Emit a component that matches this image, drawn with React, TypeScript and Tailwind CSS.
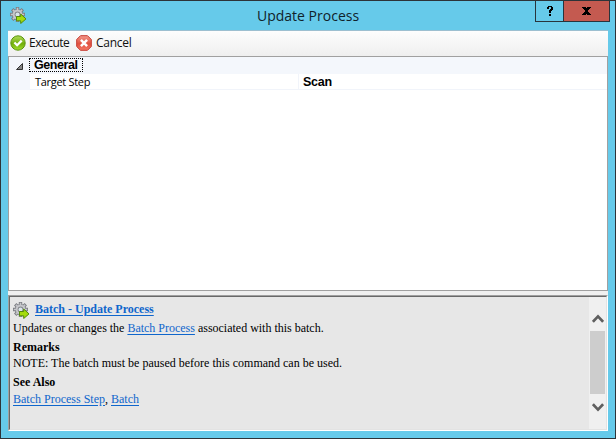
import React from "react";

function GearIcon() {
  return (
    <svg width="17" height="17" viewBox="0 0 17 17" className="block shrink-0">
      <g stroke="#7c7e83" strokeWidth="3.4">
        <path d="M7.5 0v15M0 7.5h15M2.2 2.2l10.6 10.6M12.8 2.2L2.2 12.8" />
      </g>
      <circle cx="7.5" cy="7.5" r="5.6" fill="#7c7e83" />
      <g stroke="#c6c7cb" strokeWidth="1.6">
        <path d="M7.5 .8v13.4M.8 7.5h13.4M2.9 2.9l9.2 9.2M12.1 2.9l-9.2 9.2" />
      </g>
      <circle cx="7.5" cy="7.5" r="4" fill="#d0d1d4" stroke="#c6c7cb" strokeWidth="1.6" />
      <circle cx="7.5" cy="7.5" r="2.9" fill="#808287" />
      <circle cx="7.5" cy="7.5" r="2" fill="#d9e6ea" />
      <path d="M6.5 9.5h4.2V7l5.3 4.9-5.3 4.6v-2.7H6.5z" fill="#a4dc0c" stroke="#528a0a" strokeWidth="1" />
    </svg>
  );
}

function CheckIcon() {
  return (
    <svg width="16" height="16" viewBox="0 0 16 16" className="block shrink-0">
      <defs>
        <linearGradient id="ok" x1="0" y1="0" x2="0" y2="1">
          <stop offset="0" stopColor="#b0dc58" />
          <stop offset="0.55" stopColor="#72ae0c" />
          <stop offset="1" stopColor="#a4e02c" />
        </linearGradient>
      </defs>
      <circle cx="8" cy="8" r="7.2" fill="url(#ok)" stroke="#5c9410" />
      <path d="M4.4 7.5l2.7 2.7 4.6-4.6" fill="none" stroke="#fff" strokeWidth="2.3" />
    </svg>
  );
}

function CancelIcon() {
  return (
    <svg width="16" height="16" viewBox="0 0 16 16" className="block shrink-0">
      <defs>
        <linearGradient id="no" x1="0" y1="0" x2="0" y2="1">
          <stop offset="0" stopColor="#f39a8c" />
          <stop offset="0.55" stopColor="#e0503f" />
          <stop offset="1" stopColor="#f57a66" />
        </linearGradient>
      </defs>
      <path d="M4.5 .7h7L15.3 4.5v7L11.5 15.3h-7L.7 11.5v-7z" fill="url(#no)" stroke="#c63a30" />
      <path d="M4.9 4.9l6.2 6.2M11.1 4.9l-6.2 6.2" stroke="#fff" strokeWidth="2.5" />
    </svg>
  );
}

function Link({ children }: { children: React.ReactNode }) {
  return <span className="text-[#0f66cc] underline decoration-1 underline-offset-2">{children}</span>;
}

function TitleBar() {
  return (
    <header className="grid h-[29px] grid-cols-[256px_1fr_75px] pr-[5px]">
      <div className="pl-[9px] pt-[6px]">
        <GearIcon />
      </div>
      <h1 className="whitespace-nowrap font-['Open_Sans',sans-serif] text-[14px] leading-[29px] text-[#10222a]">
        Update Process
      </h1>
      <div className="flex h-[21px] border-b border-l border-r border-[#28343c]">
        <div className="flex w-[28px] items-center justify-center border-r border-[#28343c] pb-px pl-px">
          <svg width="6" height="10" viewBox="0 0 6 10" className="block" shapeRendering="crispEdges">
            <path d="M1 0h4v1h1v3H5v1H4v2H2V4h1V3h1V1H2v2H0V1h1zM2 8h2v2H2z" fill="#000" />
          </svg>
        </div>
        <div className="flex flex-1 items-center justify-center bg-[#c45a50]">
          <svg width="9" height="8" viewBox="0 0 9 8" className="block" shapeRendering="crispEdges">
            <path d="M0 0h4v1h1V0h4v1H8v1H7v1H6v2h1v1h1v1h1v1H5V7H4v1H0V7h1V6h1V5h1V3H2V2H1V1H0z" fill="#000" />
          </svg>
        </div>
      </div>
    </header>
  );
}

function Toolbar() {
  return (
    <div className="flex h-[26px] items-center border-t border-[#9dbfd0] bg-gradient-to-b from-[#fdfdfd] to-[#efefef] pb-[2px] pl-[2px] font-['Open_Sans',sans-serif] text-[12px] text-[#101010]">
      <CheckIcon />
      <span className="ml-[3px] w-[47px] tracking-[-0.5px]">Execute</span>
      <CancelIcon />
      <span className="ml-[4px] tracking-[-0.25px]">Cancel</span>
    </div>
  );
}

function PropertyGrid() {
  return (
    <div className="h-[235px] border border-[#a0a0a0] bg-white text-black">
      <div className="flex h-[17px] bg-[#f4f7fc]">
        <div className="flex w-[20px] justify-end pr-[6px] pt-[6px]">
          <svg width="7" height="7" viewBox="0 0 7 7" className="block">
            <path d="M6.5.5v6h-6z" fill="#888" stroke="#333" strokeWidth="1" />
          </svg>
        </div>
        <div className="mt-px flex h-[14px] w-[54px] items-center border border-dotted border-black pl-[4px] pt-px font-['Liberation_Sans',sans-serif] text-[12.5px] font-bold tracking-[-0.45px]">
          General
        </div>
      </div>
      <div className="flex h-[16px]">
        <div className="w-[21px] bg-[#f4f7fc]" />
        <div className="w-[269px] whitespace-nowrap border-b border-r border-[#f1f4fa] pl-[5px] font-['Open_Sans',sans-serif] text-[11px] leading-[16px] tracking-[-0.3px]">
          Target Step
        </div>
        <div className="flex-1 border-b border-[#f1f4fa] pl-[4px] font-['Liberation_Sans',sans-serif] text-[12.5px] font-bold leading-[16px] tracking-[-0.25px]">
          Scan
        </div>
      </div>
    </div>
  );
}

function HelpPane() {
  return (
    <div className="h-[136px] border border-b-white border-l-[#a0a0a0] border-r-white border-t-[#a0a0a0]">
      <div className="flex h-full border border-b-[#e3e3e3] border-l-[#696969] border-r-[#e3e3e3] border-t-[#696969] bg-[#e7e7e7]">
        <div className="flex-1 pl-[3px] font-['Liberation_Serif',serif] text-[12px] leading-[16px] text-black">
          <div className="flex h-[23px] items-center">
            <div className="pt-[3px]">
              <GearIcon />
            </div>
            <b className="ml-[5px]">
              <Link>Batch - Update Process</Link>
            </b>
          </div>
          <p className="h-[19px] tracking-[-0.01px]">
            Updates or changes the <Link>Batch Process</Link> associated with this batch.
          </p>
          <p className="h-[16px] font-bold">Remarks</p>
          <p className="h-[19px]">NOTE: The batch must be paused before this command can be used.</p>
          <p className="h-[17px] font-bold">See Also</p>
          <p>
            <Link>Batch Process Step</Link>, <Link>Batch</Link>
          </p>
        </div>
        <div className="flex w-[17px] flex-col items-center bg-[#f0f0f0] pt-[17px]">
          <svg width="12" height="9" viewBox="0 0 12 9" className="block">
            <path d="M.9 7.8L6 2.4l5.1 5.4" fill="none" stroke="#5f5f5f" strokeWidth="2.7" />
          </svg>
          <div className="mt-[8px] h-[63px] w-[15px] bg-[#cdcdcd]" />
          <svg width="12" height="9" viewBox="0 0 12 9" className="mt-[9px] block">
            <path d="M.9 1.2L6 6.6l5.1-5.4" fill="none" stroke="#5f5f5f" strokeWidth="2.7" />
          </svg>
        </div>
      </div>
    </div>
  );
}

export default function App() {
  return (
    <div className="h-[439px] w-[616px] overflow-hidden border border-[#2d3338] bg-[#66caea]">
      <TitleBar />
      <main className="ml-[7px] flex w-[600px] flex-col bg-[#f0f0f0]">
        <Toolbar />
        <PropertyGrid />
        <div className="h-[4px]" />
        <HelpPane />
      </main>
    </div>
  );
}
